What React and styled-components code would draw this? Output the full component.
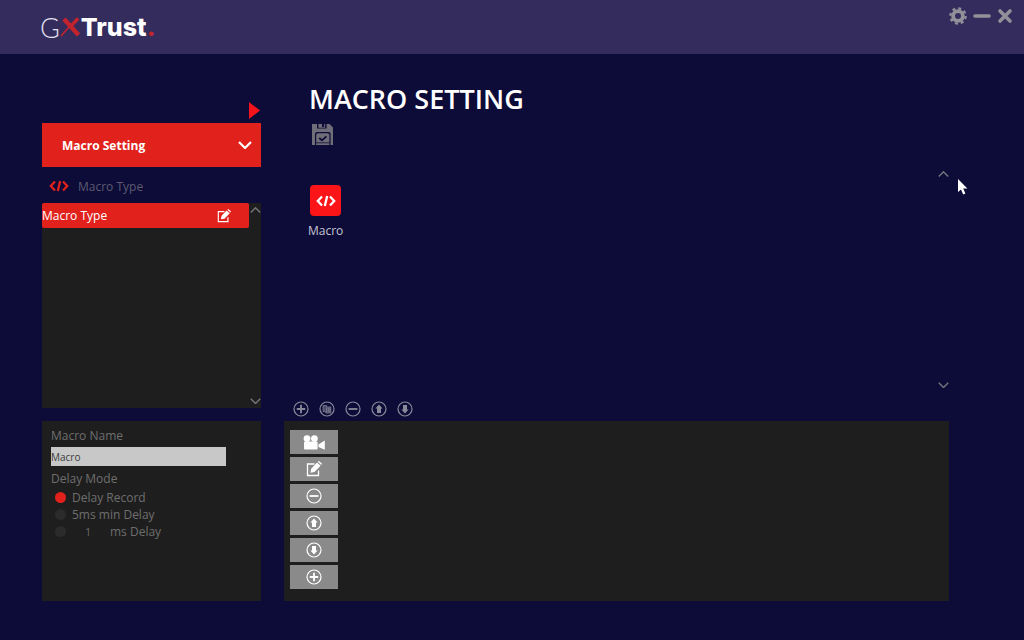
import React, { useState } from "react"
import styled, { createGlobalStyle, css } from "styled-components"

const CodeIcon = ({ width = 20 }) => (
  <Svg width={width} viewBox="0 0 20 12" $stroke={2.3}>
    <path d="M6 1.5 1.8 6 6 10.5M14 1.5 18.2 6 14 10.5M11.2 1 8.8 11" />
  </Svg>
)

const Chevron = ({ up, width = 11, stroke = 1.8 }) => (
  <Svg width={width} viewBox="0 0 14 8" $stroke={stroke}>
    <path d={up ? "M1 7 7 1 13 7" : "M1 1 7 7 13 1"} />
  </Svg>
)

const EditIcon = ({ width = 16 }) => (
  <Svg width={width} viewBox="0 0 16 16" $stroke={1.3}>
    <path d="M8.5 3H1.5V14.5H12.5V9.5" />
    <path
      d="M4.4 11.8 5.2 7.8 11 1.6 14.6 4.8 8.5 11ZM11.8 0.8 13 0 16 2.8 15.3 4Z"
      fill="currentColor"
      stroke="none"
    />
  </Svg>
)

const CameraIcon = () => (
  <Svg width={22} viewBox="0 0 22 15" $solid>
    <circle cx="4" cy="3.6" r="3.4" />
    <circle cx="11.4" cy="3.6" r="3.4" />
    <rect x="1" y="6.6" width="13.6" height="8" rx="1" />
    <path d="M15.4 9.4 21.8 5.6V14.8L15.4 12Z" />
  </Svg>
)

const SaveIcon = () => (
  <Svg width={21} viewBox="0 0 21 21" $stroke={1.4}>
    <path
      d="M0 0H5V4.6H14.6V0H17.6L21 3.4V21H18.6V10Q18.6 8 16.6 8H5Q3 8 3 10V21H0ZM6.4 0H10V3H12.2V0H13.2V3.8H6.4Z"
      fill="currentColor"
      stroke="none"
    />
    <path
      d="M6 9.2H15.6Q17.4 9.2 17.4 11V21H4.2V11Q4.2 9.2 6 9.2Z"
      fill="currentColor"
      stroke="none"
    />
    <path d="M7.2 14 10 16.4 14.4 12.4" stroke="#0c0b38" strokeWidth="1.8" />
    <path d="M4.2 18.8H17.4" stroke="#0c0b38" strokeWidth="0.8" />
  </Svg>
)

const circleMarks = {
  add: <path d="M8 3.8V12.2M3.8 8H12.2" strokeWidth="1.8" />,
  copy: (
    <path
      d="M4 4.6H7.6V6H11.8V12H6.8V10.6H4ZM7.6 7V11M9.3 7V11M10.8 7V11"
      fill="currentColor"
      fillOpacity="0.5"
      strokeWidth="0.7"
    />
  ),
  remove: <path d="M3.6 8H12.4" strokeWidth="1.8" />,
  up: (
    <path d="M8 3.6 11.6 7.6H10V12H6V7.6H4.4Z" fill="currentColor" stroke="none" />
  ),
  down: (
    <path d="M8 12.4 4.4 8.4H6V4H10V8.4H11.6Z" fill="currentColor" stroke="none" />
  ),
}

const CircleIcon = ({ mark }) => (
  <Svg width={16} viewBox="0 0 16 16" $stroke={1.2}>
    <circle cx="8" cy="8" r="7" />
    {circleMarks[mark]}
  </Svg>
)

const GearIcon = () => (
  <Svg width={18} viewBox="0 0 18 18" $stroke={3.8}>
    <circle cx="9" cy="9" r="4.9" />
    <circle cx="9" cy="9" r="7.6" strokeWidth="2.4" strokeDasharray="3 2.97" />
  </Svg>
)

const toolbar = [
  { mark: "add", label: "Add" },
  { mark: "copy", label: "Copy" },
  { mark: "remove", label: "Remove" },
  { mark: "up", label: "Move up" },
  { mark: "down", label: "Move down" },
]

const actions = [
  { label: "Record", icon: <CameraIcon /> },
  { label: "Edit", icon: <EditIcon /> },
  { label: "Remove", icon: <CircleIcon mark="remove" /> },
  { label: "Move up", icon: <CircleIcon mark="up" /> },
  { label: "Move down", icon: <CircleIcon mark="down" /> },
  { label: "Insert", icon: <CircleIcon mark="add" /> },
]

const ScrollArrows = () => (
  <Scroller>
    <IconButton aria-label="Scroll up">
      <Chevron up />
    </IconButton>
    <IconButton aria-label="Scroll down">
      <Chevron />
    </IconButton>
  </Scroller>
)

function App() {
  const [name, setName] = useState("Macro")
  const [mode, setMode] = useState("record")
  const [delay, setDelay] = useState("1")

  const radio = value => ({
    type: "radio",
    name: "delay",
    value,
    checked: mode === value,
    onChange: () => setMode(value),
  })

  return (
    <Page>
      <GlobalStyle />
      <Header>
        <Logo>
          <LogoG>G</LogoG>
          <svg width="21" height="20" viewBox="0 0 21 20" aria-hidden="true">
            <path d="M1 19 17 1" stroke="#c3232c" strokeWidth="1.6" />
            <path d="M4 2 18.5 18" stroke="#c3232c" strokeWidth="4.4" />
            <path d="M10 10.5 18.4 1.5" stroke="#c3232c" strokeWidth="3" />
          </svg>
          <span>Trust</span>
          <Dot>.</Dot>
        </Logo>
        <WindowButtons>
          <IconButton aria-label="Settings">
            <GearIcon />
          </IconButton>
          <IconButton aria-label="Minimize">
            <Svg width={18} viewBox="0 0 18 18" $stroke={3.6} $round>
              <path d="M2 9H16" />
            </Svg>
          </IconButton>
          <IconButton aria-label="Close">
            <Svg width={16} viewBox="0 0 16 16" $stroke={3.6} $round>
              <path d="M3 3 13 13M13 3 3 13" />
            </Svg>
          </IconButton>
        </WindowButtons>
      </Header>

      <Workspace>
        <Sidebar>
          <CollapseButton aria-label="Collapse">
            <Svg width={11} viewBox="0 0 11 17" $solid>
              <path d="M0 0 11 8.5 0 17Z" />
            </Svg>
          </CollapseButton>
          <MenuButton>
            Macro Setting
            <Chevron width={14} stroke={2.2} />
          </MenuButton>
          <SectionLabel>
            <CodeIcon />
            <span>Macro Type</span>
          </SectionLabel>
          <List>
            <ListItem>
              Macro Type
              <IconButton aria-label="Rename">
                <EditIcon width={14} />
              </IconButton>
            </ListItem>
            <ScrollArrows />
          </List>
        </Sidebar>

        <Main>
          <Title>MACRO SETTING</Title>
          <SaveButton aria-label="Save">
            <SaveIcon />
          </SaveButton>
          <Gallery>
            <Tile>
              <TileIcon>
                <CodeIcon />
              </TileIcon>
              Macro
            </Tile>
            <ScrollArrows />
          </Gallery>
          <Toolbar>
            {toolbar.map(({ mark, label }) => (
              <IconButton key={mark} aria-label={label}>
                <CircleIcon mark={mark} />
              </IconButton>
            ))}
          </Toolbar>
        </Main>

        <Form>
          <FieldLabel htmlFor="macro-name">Macro Name</FieldLabel>
          <NameInput
            id="macro-name"
            value={name}
            onChange={e => setName(e.target.value)}
          />
          <Modes>
            <Legend>Delay Mode</Legend>
            <RadioLabel>
              <Radio {...radio("record")} />
              Delay Record
            </RadioLabel>
            <RadioLabel>
              <Radio {...radio("min")} />
              5ms min Delay
            </RadioLabel>
            <RadioRow>
              <Radio {...radio("fixed")} aria-label="Fixed delay" />
              <DelayInput
                id="delay-ms"
                value={delay}
                onChange={e => setDelay(e.target.value)}
              />
              <label htmlFor="delay-ms">ms Delay</label>
            </RadioRow>
          </Modes>
        </Form>

        <Editor>
          {actions.map(({ label, icon }) => (
            <ActionButton key={label} aria-label={label}>
              {icon}
            </ActionButton>
          ))}
        </Editor>
      </Workspace>

      <Pointer width="10" height="16" viewBox="0 0 10 16" aria-hidden="true">
        <path d="M0 0V13L3 10.4 5.2 15.4 7.4 14.4 5.2 9.6H9.4Z" fill="#fff" />
      </Pointer>
    </Page>
  )
}

const GlobalStyle = createGlobalStyle`
  * {
    box-sizing: border-box;
  }
  body {
    margin: 0;
    background: #0d0b38;
    color: #fff;
    font-family: "Open Sans", "Noto Sans", sans-serif;
    font-size: 12px;
  }
  button,
  input {
    font-family: inherit;
  }
`
const Svg = styled.svg`
  display: block;
  flex: none;
  ${({ $solid, $stroke, $round }) =>
    $solid
      ? css`
          fill: currentColor;
        `
      : css`
          fill: none;
          stroke: currentColor;
          stroke-width: ${$stroke}px;
          stroke-linecap: ${$round ? "round" : "butt"};
        `}
`
const Page = styled.div`
  display: flex;
  flex-direction: column;
  position: relative;
  min-height: 100vh;
`
const Header = styled.header`
  display: flex;
  justify-content: space-between;
  align-items: flex-start;
  height: 54px;
  padding: 6px 11px 0 40px;
  background: #342c5c;
`
const Logo = styled.div`
  display: flex;
  align-items: center;
  height: 42px;
  font-family: Inter, sans-serif;
  font-size: 25px;
  font-weight: 800;
`
const LogoG = styled.span`
  font-family: Lato, sans-serif;
  font-size: 27px;
  font-weight: 300;
  color: #e4e0f0;
`
const Dot = styled.span`
  color: #c3232c;
`
const WindowButtons = styled.div`
  display: flex;
  align-items: center;
  gap: 6px;
  height: 20px;
  color: #929098;
`
const IconButton = styled.button`
  display: flex;
  padding: 0;
  border: 0;
  background: none;
  color: inherit;
  cursor: pointer;
`
const Workspace = styled.main`
  flex: 1;
  display: grid;
  grid-template-columns: 219px 1fr;
  grid-template-rows: 1fr auto;
  column-gap: 23px;
  padding: 0 75px 39px 42px;
`
const Sidebar = styled.aside`
  display: flex;
  flex-direction: column;
  padding: 48px 0 13px;
`
const CollapseButton = styled(IconButton)`
  align-self: flex-end;
  margin: 0 1px 4px 0;
  color: #f5141b;
`
const MenuButton = styled.button`
  display: flex;
  align-items: center;
  justify-content: space-between;
  height: 44px;
  padding: 0 9px 0 20px;
  border: 0;
  background: #e0211c;
  color: #fff;
  font-size: 12px;
  font-weight: 700;
`
const SectionLabel = styled.div`
  display: flex;
  align-items: center;
  gap: 9px;
  height: 36px;
  padding: 2px 0 0 7px;
  color: #e0211c;
  span {
    color: #5c5b70;
  }
`
const List = styled.div`
  flex: 1;
  display: flex;
  align-items: flex-start;
  background: #1e1e1e;
`
const ListItem = styled.div`
  flex: 1;
  display: flex;
  align-items: center;
  justify-content: space-between;
  height: 25px;
  padding-right: 18px;
  border-radius: 2px;
  background: #e0211c;
`
const Scroller = styled.div`
  display: flex;
  flex-direction: column;
  align-items: center;
  justify-content: space-between;
  align-self: stretch;
  width: 12px;
  padding: 4px 0;
  color: #77767f;
`
const Main = styled.section`
  display: flex;
  flex-direction: column;
`
const Title = styled.h1`
  margin: 25px 0 0 25px;
  font-size: 27px;
  line-height: 40px;
  font-weight: 600;
`
const SaveButton = styled(IconButton)`
  align-self: flex-start;
  margin: 5px 0 0 28px;
  color: #6e6d78;
`
const Gallery = styled.div`
  flex: 1;
  display: flex;
  justify-content: space-between;
  align-items: flex-start;
  margin-top: 22px;
  padding-left: 24px;
`
const Tile = styled.button`
  display: flex;
  flex-direction: column;
  align-items: center;
  gap: 6px;
  margin-top: 18px;
  padding: 0;
  border: 0;
  background: none;
  color: #c5c4d2;
  font-size: 12px;
  line-height: 18px;
`
const TileIcon = styled.span`
  display: flex;
  align-items: center;
  justify-content: center;
  width: 31px;
  height: 31px;
  border-radius: 4px;
  background: #fb1518;
  color: #fff;
`
const Toolbar = styled.div`
  display: flex;
  gap: 10px;
  padding: 9px 9px 4px;
  color: #8a899a;
`
const Form = styled.form`
  padding: 6px 9px;
  background: #1e1e1e;
  color: #6e6e6e;
`
const FieldLabel = styled.label`
  display: block;
  line-height: 18px;
`
const NameInput = styled.input`
  display: block;
  width: 175px;
  height: 19px;
  margin: 2px 0 4px;
  padding: 0;
  border: 0;
  background: #c8c8c8;
  color: #3c3c3c;
  font-size: 10px;
`
const Modes = styled.fieldset`
  margin: 0;
  padding: 0;
  border: 0;
`
const Legend = styled.legend`
  padding: 0 0 1px;
  line-height: 18px;
`
const RadioRow = styled.div`
  display: flex;
  align-items: center;
  gap: 6px;
  height: 17px;
  padding-left: 4px;
`
const RadioLabel = styled(RadioRow).attrs({ as: "label" })``
const Radio = styled.input`
  appearance: none;
  width: 11px;
  height: 11px;
  margin: 0;
  border-radius: 50%;
  background: #2b2b2b;
  &:checked {
    background: #e0211c;
  }
`
const DelayInput = styled.input`
  width: 32px;
  padding: 0;
  border: 0;
  background: none;
  color: inherit;
  font-size: 10px;
  text-align: center;
`
const Editor = styled.section`
  display: flex;
  flex-direction: column;
  gap: 3px;
  padding: 9px 6px 12px;
  background: #1e1e1e;
`
const ActionButton = styled.button`
  display: flex;
  align-items: center;
  justify-content: center;
  width: 48px;
  height: 24px;
  padding: 0;
  border: 0;
  background: #8a8a8a;
  color: #fff;
`
const Pointer = styled.svg`
  position: absolute;
  top: 179px;
  left: 958px;
`

export default App
